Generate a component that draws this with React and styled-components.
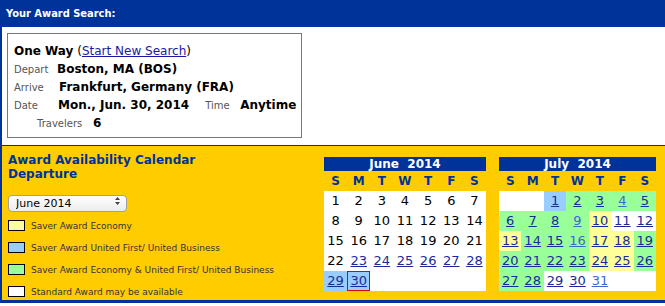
import styled, { createGlobalStyle } from "styled-components";

const BLUE = "#003399";
const YELLOW = "#ffcc00";
const BG = { w: "#ffffff", y: "#ffff99", b: "#99ccff", g: "#99ff99", n: "transparent" };

const GlobalStyle = createGlobalStyle`
  html, body { margin: 0; padding: 0; background: #fff; }
  body { font-family: "DejaVu Sans", Verdana, sans-serif; width: 665px; }
`;

const Header = styled.div`
  height: 27px;
  background: ${BLUE};
  color: #fff;
  font-family: "DejaVu Sans Condensed", "DejaVu Sans", sans-serif;
  font-weight: bold;
  font-size: 11px;
  line-height: 27px;
  padding-left: 6px;
`;

const Body = styled.div`
  border-left: 2px solid ${BLUE};
`;

const Summary = styled.div`
  height: 119px;
  padding: 6px 0 0 5px;
  box-sizing: border-box;
  border-bottom: 1px solid ${BLUE};
`;

const SummaryBox = styled.div`
  width: 295px;
  height: 105px;
  box-sizing: border-box;
  border: 1px solid #777;
  padding: 8px 0 0 6px;
`;

const Line = styled.div`
  display: flex;
  align-items: baseline;
  height: 18px;
  line-height: 18px;
  padding-left: ${(p) => p.$indent || 0}px;
`;

const Label = styled.span`
  font-size: 10px;
  color: #555;
  width: ${(p) => p.$w || 44}px;
`;

const Value = styled.span`
  font-size: 12px;
  font-weight: bold;
  color: #000;
  margin-right: ${(p) => p.$mr || 0}px;
`;

const Link = styled.a`
  color: #1a1aa6;
  font-size: 12px;
  text-decoration: underline;
`;

const Plain = styled.span`
  font-size: 12px;
  color: #000;
`;

const CalendarSection = styled.div`
  display: flex;
  background: ${YELLOW};
  height: 157px;
  box-sizing: border-box;
  border-bottom: 3px solid ${BLUE};
`;

const LeftCol = styled.div`
  width: 322px;
  padding: 7px 0 0 6px;
  box-sizing: border-box;
`;

const Title = styled.div`
  color: ${BLUE};
  font-weight: bold;
  font-size: 12px;
  line-height: 14px;
`;

const SelectWrap = styled.div`
  position: relative;
  width: 119px;
  height: 17px;
  margin-top: 11px;
`;

const Select = styled.select`
  appearance: none;
  width: 100%;
  height: 100%;
  border: 1px solid #a0a0a0;
  border-radius: 4px;
  background: linear-gradient(#ffffff, #ececec);
  font-family: "DejaVu Sans", Verdana, sans-serif;
  font-size: 11px;
  color: #000;
  padding: 0 0 0 7px;
  box-sizing: border-box;
`;

const Arrows = styled.svg`
  position: absolute;
  right: 7px;
  top: 5px;
  pointer-events: none;
`;

const Legend = styled.div`
  margin-top: 11px;
  display: flex;
  flex-direction: column;
  gap: 11px;
`;

const LegendRow = styled.div`
  display: flex;
  align-items: center;
  height: 11px;
  font-size: 9px;
  color: #333;
`;

const Swatch = styled.span`
  width: 15px;
  height: 9px;
  border: 1px solid #000;
  background: ${(p) => p.$bg};
  margin-right: 6px;
`;

const Calendars = styled.div`
  display: flex;
  gap: 13px;
  padding-top: 11px;
`;

const Cal = styled.table`
  width: ${(p) => p.$w}px;
  border-collapse: collapse;
  table-layout: fixed;
  align-self: flex-start;
`;

const MonthBar = styled.th`
  background: ${BLUE};
  color: #fff;
  font-size: 12px;
  font-weight: bold;
  height: 14px;
  line-height: 14px;
  padding: 0;
  white-space: pre;
`;

const Dow = styled.th`
  color: ${BLUE};
  font-size: 12px;
  font-weight: bold;
  height: 20px;
  padding: 0;
`;

const Day = styled.td`
  background: ${(p) => BG[p.$bg]};
  height: 20px;
  padding: 0;
  text-align: center;
  font-size: 13px;
  line-height: 20px;
  color: #000;
  box-shadow: ${(p) => (p.$sel ? "inset 0 0 0 1px #e00000" : "none")};
`;

const DayLink = styled.a`
  color: ${(p) => (p.$light ? "#4466cc" : "#1a2a9c")};
  text-decoration: underline;
`;

const june = [
  [1, 2, 3, 4, 5, 6, 7],
  [8, 9, 10, 11, 12, 13, 14],
  [15, 16, 17, 18, 19, 20, 21],
  [22, 23, 24, 25, 26, 27, 28],
  [29, 30, null, null, null, null, null],
];
const juneBg = (d) => (d === 29 || d === 30 ? "b" : "w");

const july = [
  [null, null, 1, 2, 3, 4, 5],
  [6, 7, 8, 9, 10, 11, 12],
  [13, 14, 15, 16, 17, 18, 19],
  [20, 21, 22, 23, 24, 25, 26],
  [27, 28, 29, 30, 31, null, null],
];
const julyBg = {
  1: "b", 10: "y", 11: "w", 12: "w", 13: "y", 17: "y", 18: "y", 24: "y", 25: "y",
  29: "w", 30: "w", 31: "w",
};
const julyLight = [4, 9, 16, 31];

const DOW = ["S", "M", "T", "W", "T", "F", "S"];

const Calendar = ({ title, width, weeks, bgFor, isLink, isLight, selected }) => (
  <Cal $w={width}>
    <thead>
      <tr>
        <MonthBar colSpan={7}>{title}</MonthBar>
      </tr>
      <tr>
        {DOW.map((d, i) => (
          <Dow key={i}>{d}</Dow>
        ))}
      </tr>
    </thead>
    <tbody>
      {weeks.map((week, r) => (
        <tr key={r}>
          {week.map((d, c) => (
            <Day key={c} $bg={d ? bgFor(d) : "w"} $sel={d === selected}>
              {d && isLink(d) ? (
                <DayLink href="#" $light={isLight(d)}>
                  {d}
                </DayLink>
              ) : (
                d
              )}
            </Day>
          ))}
        </tr>
      ))}
    </tbody>
  </Cal>
);

const legend = [
  ["#ffff99", "Saver Award Economy"],
  ["#99ccff", "Saver Award United First/ United Business"],
  ["#99ff99", "Saver Award Economy & United First/ United Business"],
  ["#ffffff", "Standard Award may be available"],
];

export default function App() {
  return (
    <>
      <GlobalStyle />
      <Header>Your Award Search:</Header>
      <Body>
        <Summary>
          <SummaryBox>
            <Line>
              <Value>One Way</Value>
              <Plain>&nbsp;(</Plain>
              <Link href="#">Start New Search</Link>
              <Plain>)</Plain>
            </Line>
            <Line>
              <Label $w={43}>Depart</Label>
              <Value>Boston, MA (BOS)</Value>
            </Line>
            <Line>
              <Label $w={45}>Arrive</Label>
              <Value>Frankfurt, Germany (FRA)</Value>
            </Line>
            <Line>
              <Label $w={44}>Date</Label>
              <Value $mr={16}>Mon., Jun. 30, 2014</Value>
              <Label $w={35}>Time</Label>
              <Value>Anytime</Value>
            </Line>
            <Line $indent={23}>
              <Label $w={56}>Travelers</Label>
              <Value>6</Value>
            </Line>
          </SummaryBox>
        </Summary>
        <CalendarSection>
          <LeftCol>
            <Title>
              Award Availability Calendar
              <br />
              Departure
            </Title>
            <SelectWrap>
              <Select defaultValue="June 2014">
                <option>June 2014</option>
                <option>July 2014</option>
              </Select>
              <Arrows width="5" height="8" viewBox="0 0 5 8">
                <path d="M2.5 0 L5 3 L0 3 Z M0 5 L5 5 L2.5 8 Z" fill="#444" />
              </Arrows>
            </SelectWrap>
            <Legend>
              {legend.map(([c, t]) => (
                <LegendRow key={t}>
                  <Swatch $bg={c} />
                  {t}
                </LegendRow>
              ))}
            </Legend>
          </LeftCol>
          <Calendars>
            <Calendar
              title="June  2014"
              width={162}
              weeks={june}
              bgFor={juneBg}
              isLink={(d) => d >= 23}
              isLight={() => false}
              selected={30}
            />
            <Calendar
              title="July  2014"
              width={157}
              weeks={july}
              bgFor={(d) => julyBg[d] || "g"}
              isLink={() => true}
              isLight={(d) => julyLight.includes(d)}
            />
          </Calendars>
        </CalendarSection>
      </Body>
    </>
  );
}
